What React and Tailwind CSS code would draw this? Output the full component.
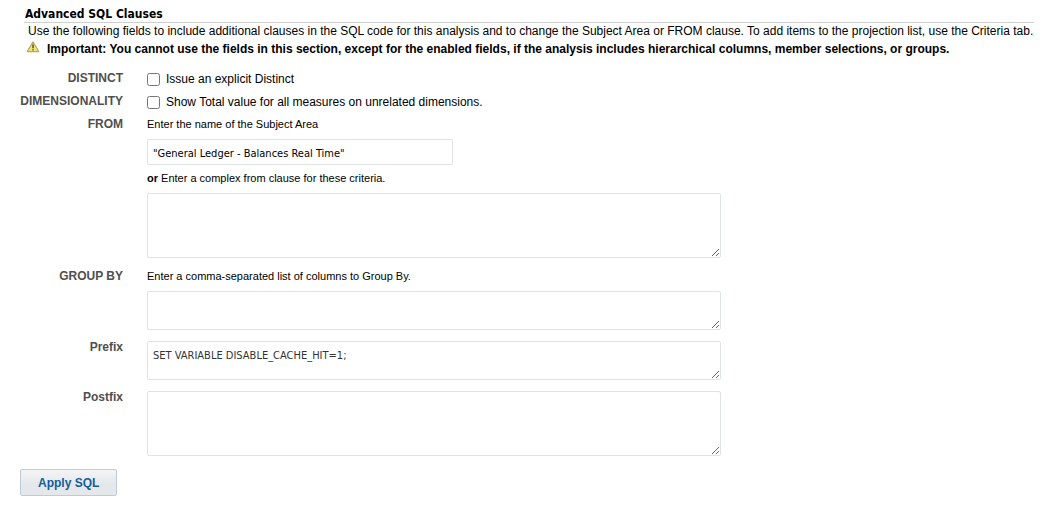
import React from 'react';

const boxStyle =
  "block border border-[#dfe3e4] rounded-xs bg-white px-[5px] font-['DejaVu_Sans_Condensed','Noto_Sans',sans-serif] text-[11px] leading-4";
const hintStyle = 'block text-[11px] leading-[23px]';

const WarningIcon = () => (
  <svg className="w-3.5 h-3 shrink-0" viewBox="0 0 14 12" aria-hidden="true">
    <path d="M7 0.9 L12.8 10.6 H1.2 Z" fill="#efe676" stroke="#b3ab62" strokeWidth="1.1" strokeLinejoin="round" />
    <path d="M7 3.6 V7.3" stroke="#4a4726" strokeWidth="1.4" />
    <path d="M7 8.2 V9.6" stroke="#4a4726" strokeWidth="1.4" />
  </svg>
);

const Row = ({ title, htmlFor, children }) => {
  const titleStyle = 'w-[103px] shrink-0 text-right text-xs leading-[23px] font-bold text-[#4f4f4f]';

  return (
    <div className="flex gap-6">
      {htmlFor ? (
        <label htmlFor={htmlFor} className={titleStyle}>{title}</label>
      ) : (
        <span className={titleStyle}>{title}</span>
      )}
      <div className="grow min-w-0">{children}</div>
    </div>
  );
};

const Checkbox = ({ id, label }) => (
  <div className="flex items-center h-[23px]">
    <input id={id} type="checkbox" className="size-[13px] mt-0.5 mr-1.5" />
    <label htmlFor={id} className="text-xs">{label}</label>
  </div>
);

const TextArea = ({ size = 'h-[39px]', ...props }) => (
  <textarea className={`${boxStyle} ${size} w-full max-w-[574px] py-1.5 resize text-[#333]`} {...props} />
);

function App() {
  return (
    <main className="pt-1.5 pb-5 pl-5 pr-[21px] bg-white text-black font-['Liberation_Sans',Arial,sans-serif]">
      <h1 className="ml-1 pl-px h-[17px] border-b border-[#cfcfcf] font-['DejaVu_Sans_Condensed','Noto_Sans',sans-serif] text-xs leading-4 font-bold">
        Advanced SQL Clauses
      </h1>
      <p className="ml-2 text-xs leading-4">
        Use the following fields to include additional clauses in the SQL code for this analysis and to change the
        Subject Area or FROM clause. To add items to the projection list, use the Criteria tab.
      </p>
      <div className="flex items-start gap-[7px] ml-1.5 mt-0.5">
        <WarningIcon />
        <p className="text-xs leading-4 font-bold">
          Important: You cannot use the fields in this section, except for the enabled fields, if the analysis includes
          hierarchical columns, member selections, or groups.
        </p>
      </div>

      <form className="mt-2.5" onSubmit={(e) => e.preventDefault()}>
        <Row title="DISTINCT">
          <Checkbox id="distinct" label="Issue an explicit Distinct" />
        </Row>
        <Row title="DIMENSIONALITY">
          <Checkbox id="dimensionality" label="Show Total value for all measures on unrelated dimensions." />
        </Row>

        <Row title="FROM">
          <label htmlFor="subject-area" className={hintStyle}>Enter the name of the Subject Area</label>
          <input
            id="subject-area"
            type="text"
            defaultValue={'"General Ledger - Balances Real Time"'}
            className={`${boxStyle} mt-[3px] h-[26px] w-[306px] max-w-full pt-0.5`}
          />
          <label htmlFor="from-clause" className={`${hintStyle} mt-0.5`}>
            <b>or</b> Enter a complex from clause for these criteria.
          </label>
          <div className="mt-[3px]">
            <TextArea id="from-clause" size="h-[65px]" />
          </div>
        </Row>

        <div className="mt-[7px]">
          <Row title="GROUP BY">
            <label htmlFor="group-by" className={hintStyle}>
              Enter a comma-separated list of columns to Group By.
            </label>
            <div className="mt-[3px]">
              <TextArea id="group-by" />
            </div>
          </Row>
        </div>

        <div className="mt-1.5">
          <Row title="Prefix" htmlFor="prefix">
            <div className="mt-[5px]">
              <TextArea id="prefix" defaultValue="SET VARIABLE DISABLE_CACHE_HIT=1;" />
            </div>
          </Row>
        </div>

        <div className="mt-1.5">
          <Row title="Postfix" htmlFor="postfix">
            <div className="mt-[5px]">
              <TextArea id="postfix" size="h-[65px]" />
            </div>
          </Row>
        </div>

        <button
          type="submit"
          className="mt-[13px] h-[27px] px-[17px] border border-[#c0ccd5] rounded-xs bg-linear-to-b from-[#f3f4f5] to-[#e4e8ea] to-60% text-xs font-bold text-[#145c9e]"
        >
          Apply SQL
        </button>
      </form>
    </main>
  );
}

export default App;
